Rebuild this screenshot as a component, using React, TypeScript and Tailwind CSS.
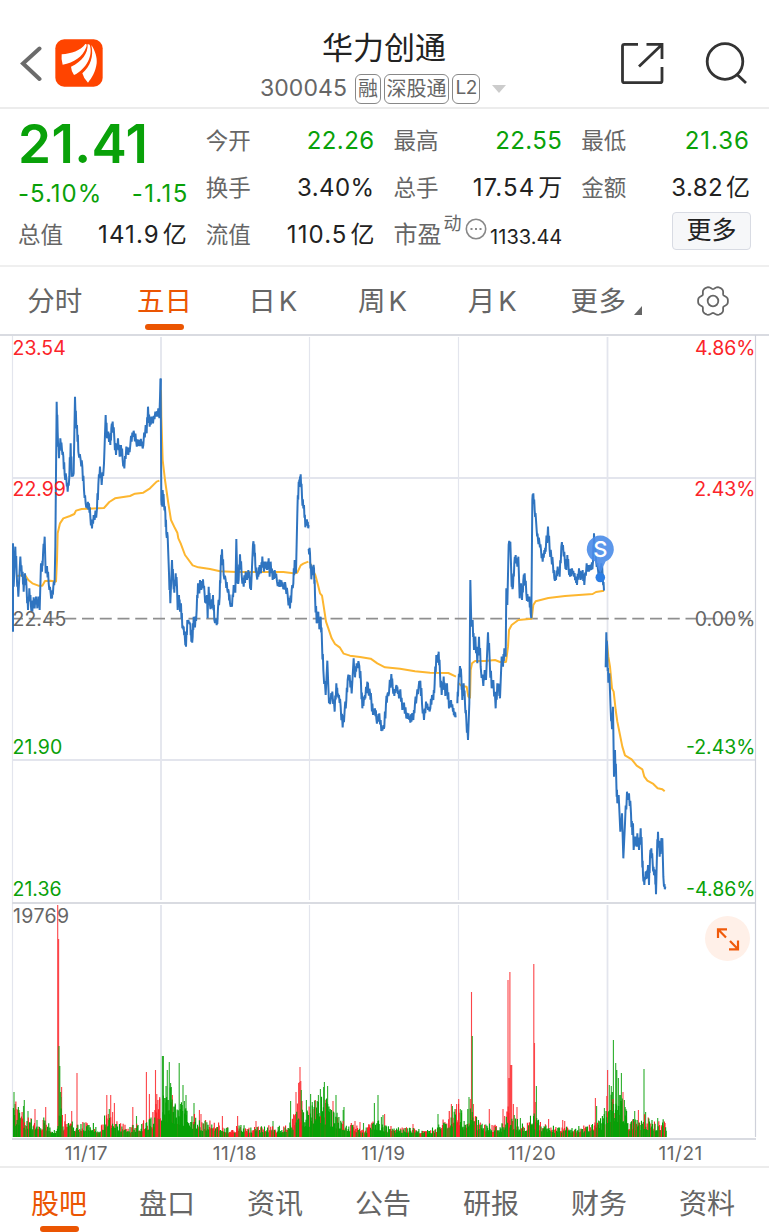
import { FC, ReactNode } from 'react';

const FONT = `font-['Inter','Noto_Sans_CJK_SC',sans-serif]`;

const GREEN = '#09a109';
const RED = '#fb2429';

interface Trace {
  x: number;
  y: number;
  price: string;
  average: string;
}

// one entry per trading day, points are in thirds of a pixel from x / y
const traces: Trace[] = [
  {
    x: 0,
    y: 360,
    price:
      '39,815 39,550 41,680 46,560 50,640 55,710 61,590 66,650 68,635 71,695 75,640 80,690 84,750 88,685 93,740 97,755 101,712 104,745 108,710 112,745 115,710 119,750 123,610 126,635 129,585 134,530 137,640 141,618 146,670 152,700 156,715 160,680 164,660 166,560 170,125 173,215 177,295 181,235 186,270 190,290 194,345 199,355 203,395 208,350 212,250 215,350 221,340 225,110 229,205 231,195 235,275 242,300 247,320 252,390 257,430 262,445 267,430 271,470 276,505 281,465 284,480 291,445 295,375 300,320 305,375 312,310 317,165 321,235 325,215 331,255 334,205 338,185 343,235 348,285 354,235 359,290 363,255 368,300 373,325 379,260 385,285 391,255 397,218 403,225 408,240 415,258 420,240 424,255 430,255 437,195 440,220 444,140 449,200 454,170 459,190 466,155 470,170 475,145 478,175 482,55',
    average:
      '50,648 75,645 85,660 97,670 115,677 127,677 135,663 152,662 168,665 171,600 173,520 180,490 190,475 210,468 223,462 228,452 245,447 312,444 328,426 345,415 390,408 405,401 430,398 450,385 470,365 478,362',
  },
  {
    x: 150,
    y: 440,
    price:
      '32,-183 34,180 37,200 38,150 42,190 46,220 49,280 53,290 57,400 61,490 66,360 70,430 73,458 77,400 81,440 83,510 87,465 90,515 93,490 97,565 101,560 105,600 108,620 112,540 117,550 121,550 124,605 128,590 131,530 135,562 140,510 144,430 148,460 150,420 154,450 159,418 164,465 168,490 171,465 173,535 176,440 180,495 184,505 189,465 193,540 199,545 202,552 204,505 209,470 212,380 216,328 221,405 227,420 232,450 236,455 240,490 246,500 251,435 256,458 259,297 262,430 266,420 270,343 275,405 281,440 287,395 291,420 295,390 299,420 303,450 309,313 313,313 316,375 320,405 325,410 329,375 333,400 337,350 342,395 346,365 351,390 356,355 359,410 362,365 368,420 374,390 381,425 387,440 391,420 396,440 402,435 407,440 413,465 420,505 425,450 430,430 434,360 438,400 442,220 446,125 449,135 452,103 456,170 460,205 462,195 466,262 468,240 472,255 476,255',
    average:
      '33,-150 34,-70 38,60 45,120 55,190 63,240 75,265 82,278 85,295 92,310 105,345 128,376 145,382 180,387 210,394 260,396 400,396 430,400 442,398 452,376 460,371 475,365',
  },
  {
    x: 300,
    y: 540,
    price:
      '26,27 30,40 34,118 38,80 42,85 45,165 50,250 55,215 58,268 62,230 66,310 70,390 77,465 82,362 87,490 92,480 97,455 104,515 109,430 113,470 117,465 122,500 128,562 134,510 139,480 143,420 149,405 155,460 161,355 165,412 170,370 178,378 183,430 187,505 192,470 196,475 202,425 205,455 210,458 214,480 219,525 225,505 229,535 234,545 238,520 244,573 249,562 253,560 258,490 262,465 267,460 274,402 278,440 283,468 288,440 292,440 297,475 301,448 307,510 312,488 319,535 325,520 331,548 336,520 340,540 345,490 350,470 356,440 361,422 366,490 372,540 378,485 384,510 391,505 396,465 400,480 404,430 409,345 413,368 416,335 420,400 425,465 431,410 436,468 441,430 447,505 453,480 459,515 463,515 467,532',
    average:
      '29,65 38,90 46,105 54,135 60,160 66,167 72,205 78,245 85,265 95,295 105,312 120,323 131,341 150,347 180,351 212,356 232,370 255,382 300,386 345,394 390,398 445,399 468,410',
  },
  {
    x: 440,
    y: 470,
    price:
      '52,700 55,645 60,588 64,620 67,690 71,640 75,700 79,750 84,810 88,700 91,330 94,470 98,450 102,540 106,500 112,580 117,500 122,590 130,648 134,600 138,630 144,487 149,570 155,655 160,630 167,715 172,640 177,660 180,685 185,560 189,590 193,535 197,560 199,355 202,405 206,225 211,215 215,350 219,350 223,280 227,255 232,290 235,260 239,385 243,340 246,390 250,330 254,310 259,370 264,395 268,380 272,430 274,445 277,90 280,70 284,120 288,150 290,180 294,210 298,215 303,240 308,275 313,240 317,245 324,170 329,240 334,260 339,285 343,325 348,330 353,290 359,320 364,230 369,225 375,280 379,300 382,255 386,300 390,320 396,295 402,320 407,320 411,345 417,295 422,330 428,300 433,345 440,280 444,305 448,285 454,300 459,275 462,190 468,270 474,300 480,320 484,280 488,320 492,362',
    average:
      '56,640 65,648 80,650 85,680 90,685 92,600 96,580 105,573 135,573 165,570 180,576 198,576 204,530 207,480 215,465 235,450 275,446 280,405 287,394 325,384 375,378 458,372 468,366 492,362',
  },
  {
    x: 590,
    y: 590,
    price:
      '47,232 49,127 52,200 55,278 58,250 62,360 66,418 69,350 72,560 75,480 79,580 82,640 86,615 91,725 96,670 100,805 105,700 111,605 114,630 117,610 123,670 127,735 129,700 131,780 136,740 141,770 142,730 147,780 152,715 156,790 159,855 163,885 167,845 171,865 174,825 177,885 180,800 184,775 188,820 192,855 195,840 198,913 201,790 204,725 209,800 213,760 217,745 220,860 222,890 226,890',
    average:
      '50,150 55,200 60,230 66,295 71,305 77,360 82,395 90,435 97,470 105,496 125,508 140,527 157,538 163,560 172,572 190,582 203,595 217,598 224,604',
  },
];

type Spike = [x: number, height: number];

const redSpikes: Spike[] = [
  [17, 28], [31, 19], [35, 28], [45.7, 30], [57.7, 232], [58.6, 198], [61.6, 50],
  [65.3, 23], [71.7, 26], [77, 64], [106.8, 42], [108.4, 23], [110.7, 42], [112.6, 25],
  [114.4, 34], [132.8, 30], [146.4, 65], [149.4, 43], [154.8, 27], [155.5, 67],
  [156.8, 43], [158, 37], [159.7, 40], [172.4, 42], [199.4, 27], [201, 23], [222.4, 21],
  [237.6, 21], [256, 16], [296, 45], [298.6, 54], [299.4, 55], [300, 70], [300.8, 56],
  [302, 36], [315.4, 37], [321.5, 33], [333, 36], [355, 16], [360, 15], [384.6, 23],
  [413, 13], [451.4, 33], [456.6, 33], [458.7, 38], [470.3, 38], [471.5, 145],
  [473.4, 33], [489.3, 28], [503, 28], [504.6, 21], [508, 157], [509.2, 59],
  [509.9, 165], [511, 72], [511.7, 72], [513.4, 33], [517, 30], [533.8, 173],
  [534.5, 94], [535.3, 35], [548.6, 18], [562.7, 17], [564.7, 16], [595.4, 39],
  [606.8, 41], [607.6, 67], [614.2, 24], [619.5, 22], [623, 45], [626.5, 20], [638.4, 27],
];

const greenSpikes: Spike[] = [
  [14, 45], [15.3, 33], [19, 27], [23.5, 31], [24.3, 37], [28, 26], [37, 17], [59, 91],
  [59.8, 71], [60.6, 45], [61, 40], [109.3, 28], [136.5, 21], [162.4, 81], [163.4, 81],
  [165, 39], [166, 51], [167.3, 67], [168.2, 37], [169.3, 75], [170.6, 54], [171.4, 50],
  [174, 30], [175.4, 32], [179.2, 74], [180.5, 33], [182, 32], [183, 52], [184.4, 36],
  [186, 42], [194, 34], [273, 16], [290.6, 36], [301.3, 47], [306.4, 37], [307.6, 25],
  [310.6, 43], [312.3, 35], [318.4, 42], [320.4, 48], [323.6, 50], [324.4, 55],
  [325.6, 34], [326.4, 37], [327.6, 51], [336, 42], [344, 30], [343.2, 27], [363.5, 14],
  [374.4, 34], [378, 42], [381.4, 20], [383, 22], [438, 23], [452.4, 31], [455, 28],
  [460.3, 28], [461.5, 24], [469, 40], [472.3, 101], [514.3, 22], [520.4, 19],
  [536.4, 51], [537.3, 14], [596.6, 31], [604.4, 29], [609.3, 52], [611.3, 51],
  [612.4, 45], [613.4, 97], [615.7, 74], [616.8, 67], [618.4, 59], [620.6, 42],
  [621.4, 64], [624.4, 37], [625.2, 30], [634.7, 26], [644, 68], [645.6, 25],
  [657.7, 19], [664.3, 13],
];

// upper bound of the quiet minutes between spikes and the share of green in them
const quiet: [x: number, height: number, green: number][] = [
  [13, 36, 0.7], [20, 22, 0.6], [32, 14, 0.4], [46, 16, 0.4], [52, 5, 0.8], [57, 8, 0.5],
  [60, 36, 0.6], [63, 16, 0.5], [78, 10, 0.7], [90, 14, 0.8], [98, 6, 0.3], [107, 24, 0.4],
  [116, 14, 0.6], [128, 8, 0.5], [142, 12, 0.4], [150, 18, 0.3], [159, 34, 0.3],
  [162, 48, 0.95], [172, 42, 0.85], [182, 34, 0.85], [192, 22, 0.6], [202, 14, 0.4],
  [222, 12, 0.6], [230, 5, 0.4], [240, 10, 0.5], [250, 7, 0.4], [262, 9, 0.5],
  [285, 8, 0.5], [294, 20, 0.3], [300, 45, 0.3], [304, 20, 0.8], [312, 32, 0.9],
  [326, 36, 0.85], [334, 24, 0.7], [344, 16, 0.7], [352, 11, 0.3], [365, 6, 0.5],
  [376, 18, 0.9], [386, 9, 0.5], [410, 7, 0.4], [430, 5, 0.5], [440, 12, 0.6],
  [450, 26, 0.5], [460, 30, 0.6], [465, 12, 0.7], [471, 40, 0.7], [477, 14, 0.6],
  [500, 9, 0.6], [508, 26, 0.3], [513, 18, 0.6], [525, 8, 0.7], [533, 22, 0.6],
  [538, 14, 0.7], [555, 8, 0.5], [580, 8, 0.5], [592, 12, 0.4], [598, 12, 0.9],
  [604, 24, 0.9], [610, 42, 0.8], [622, 36, 0.8], [630, 14, 0.6], [645, 20, 0.5],
  [655, 12, 0.5], [667, 15, 0.7],
];

const noise = (n: number) => {
  const v = Math.sin(n * 127.1 + 11.7) * 43758.5453;
  return v - Math.floor(v);
};

// fills in the minute ticks between two neighbouring turning points
const withTicks = (price: string) => {
  const points = price.split(' ').map((point) => point.split(',').map(Number));
  return points
    .flatMap(([x, y], i) => {
      const next = points[i + 1];
      if (!next || next[0] - x < 3 || Math.abs(next[1] - y) > 100) return [`${x},${y}`];
      const dx = next[0] - x;
      const dy = next[1] - y;
      const swing = 8 + 16 * noise(i + x);
      const sign = dy > 0 ? -1 : 1;
      return [
        `${x},${y}`,
        `${x + dx * 0.35},${(y + dy * 0.5 - (sign * swing) / 2).toFixed(1)}`,
        `${x + dx * 0.65},${(y + dy * 0.5 + (sign * swing) / 2).toFixed(1)}`,
      ];
    })
    .join(' ');
};

const quietBars = (() => {
  const paths = { green: '', red: '' };
  for (let i = 0; i < 1054; i++) {
    const x = 13.4 + i * 0.62;
    if (Math.abs(x - 160.8) < 0.4 || Math.abs(x - 605.5) < 0.4) continue;
    const next = Math.max(1, quiet.findIndex((entry) => entry[0] > x));
    const [x0, h0, g0] = quiet[next - 1];
    const [x1, h1] = quiet[next];
    const limit = h0 + ((h1 - h0) * (x - x0)) / (x1 - x0);
    const height = 2 + limit * (0.28 + 0.85 * noise(i) ** 1.6);
    const color = noise(i + 5000) < g0 ? 'green' : 'red';
    paths[color] += `M${x.toFixed(2)} 1137v-${height.toFixed(1)}`;
  }
  return paths;
})();

const spikePath = (spikes: Spike[]) =>
  spikes.map(([x, height]) => `M${x} 1137v-${height}`).join('');

const gearPath = (() => {
  const points: string[] = [];
  for (let i = 0; i < 72; i++) {
    const angle = (i * Math.PI) / 36;
    const radius = 13.8 + 1.5 * Math.cos(6 * angle) - 0.4 * Math.cos(12 * angle);
    points.push(
      `${(17 + radius * Math.cos(angle)).toFixed(2)} ${(17 + radius * Math.sin(angle)).toFixed(2)}`
    );
  }
  return `M${points.join('L')}Z`;
})();

const Header: FC = () => (
  <header className="flex h-[109px] items-start justify-between border-b-2 border-[#ececec] pr-[21px] pl-5">
    <div className="flex w-[180px] items-center gap-[13px] pt-[39px]">
      <svg width="22" height="48" viewBox="0 0 22 48" fill="none">
        <path d="M19.5 9.5 3 24.5 19.5 40" stroke="#6b6b6b" strokeWidth="4" strokeLinecap="round" />
      </svg>
      <svg width="48" height="48" viewBox="165 58 144 144">
        <rect x="166" y="59" width="142" height="142" rx="27" fill="#ff4400" />
        <g fill="#fff">
          <path d="M185 104C215 101 240 94 256 73Q262 71 259 82C248 112 222 129 188 135Q183 120 185 104Z" />
          <path d="M213 141C246 126 264 102 263 73L269 75C280 108 259 148 222 166Q214 155 213 141Z" />
          <path d="M274 76C285 92 292 114 290 131C287 156 275 176 264 189Q251 177 247 161C271 139 282 110 274 76Z" />
        </g>
      </svg>
    </div>
    <div className="flex flex-col items-center pt-[28px]">
      <h1 className="text-[31px] leading-[40px] text-[#222]">华力创通</h1>
      <div className="mt-[5px] flex h-[31px] items-center gap-[3px] pr-[2px] text-[#666]">
        <span className="mr-[5px] text-[23px] tracking-[0.1px]">300045</span>
        <span className="flex h-[30px] w-[26px] items-center justify-center rounded-md border-[1.5px] border-[#888] text-[20px]">融</span>
        <span className="flex h-[30px] w-[65px] items-center justify-center rounded-md border-[1.5px] border-[#888] text-[20px]">深股通</span>
        <span className="flex h-[30px] w-[28px] items-center justify-center rounded-md border-[1.5px] border-[#888] text-[19px] tracking-[-0.5px]">L2</span>
        <svg className="ml-[9px]" width="14" height="8" viewBox="0 0 14 8">
          <path d="M0 0h14L7 8Z" fill="#ccc" />
        </svg>
      </div>
    </div>
    <div className="flex w-[180px] justify-end gap-[40px] pt-[41px]">
      <svg width="44" height="44" viewBox="620 41 44 44" fill="none" stroke="#333" strokeWidth="2.8">
        <path d="M638 44.3H624.5Q622.5 44.3 622.5 46.3V80.7Q622.5 82.7 624.5 82.7H660Q662 82.7 662 80.7V67M646.5 44.3H662V59M639 66.5 661.5 45" />
      </svg>
      <svg width="44" height="44" viewBox="703 41 44 44" fill="none" stroke="#333" strokeWidth="2.8">
        <circle cx="724" cy="61.5" r="17.8" />
        <path d="m736 74.5 9 8.5" />
      </svg>
    </div>
  </header>
);

interface QuoteProps {
  label: string;
  value: string;
  unit?: string;
  className?: string;
}

const Quote: FC<QuoteProps> = ({ label, value, unit, className = 'text-[#222] tracking-[0.4px]' }) => (
  <div className="flex items-center justify-between whitespace-nowrap">
    <span className="text-[22.5px] text-[#666]">{label}</span>
    <span className={`text-[24px] ${className}`}>
      {value}
      {unit && <span className="ml-[3px] tracking-normal">{unit}</span>}
    </span>
  </div>
);

const Cell: FC<{ children: ReactNode; className: string }> = ({ children, className }) => (
  <div className={`flex items-center ${className}`}>{children}</div>
);

const Quotes: FC = () => (
  <section className="grid h-[158px] grid-cols-4 grid-rows-[47px_47px_47px] gap-x-[19px] border-b-2 border-[#efefef] pt-[8px] pr-[19px] pl-[18px]">
    <Cell className="pt-[7px] text-[53px] leading-none font-semibold tracking-[0.4px] text-[#09a109]">
      21.41
    </Cell>
    <Quote label="今开" value="22.26" className="tracking-[0.4px] text-[#09a109]" />
    <Quote label="最高" value="22.55" className="tracking-[0.4px] text-[#09a109]" />
    <Quote label="最低" value="21.36" className="tracking-[1px] text-[#09a109]" />
    <Cell className="justify-between pt-[12px] text-[24px] tracking-[1px] text-[#09a109]">
      <span>-5.10%</span>
      <span className="-mr-[2px] tracking-[1.4px]">-1.15</span>
    </Cell>
    <Quote label="换手" value="3.40%" />
    <Quote label="总手" value="17.54" unit="万" className="tracking-[1.1px] text-[#222]" />
    <Quote label="金额" value="3.82" unit="亿" />
    <Quote label="总值" value="141.9" unit="亿" className="tracking-[1.1px] text-[#222]" />
    <Quote label="流值" value="110.5" unit="亿" className="tracking-[1.1px] text-[#222]" />
    <Cell className="whitespace-nowrap text-[#666]">
      <span className="text-[24px]">市盈</span>
      <span className="mb-[22px] ml-[2px] text-[18px]">动</span>
      <svg className="mb-[12px] ml-[3px]" width="22" height="22" viewBox="0 0 22 22">
        <circle cx="11" cy="11" r="9.7" fill="none" stroke="#888" strokeWidth="1.6" />
        <path d="M5.5 11h2M10 11h2M14.5 11h2" stroke="#888" strokeWidth="2" />
      </svg>
      <span className="mt-[5px] ml-auto text-[20px] text-[#222]">1133.44</span>
    </Cell>
    <Cell className="justify-end">
      <button className="-mr-[1px] mb-[8px] h-[38px] w-[79px] rounded-[4px] border border-[#d8dbe3] bg-[#f6f7f9] text-[25px] leading-none text-[#222]">
        更多
      </button>
    </Cell>
  </section>
);

const periods = ['分时', '五日', '日K', '周K', '月K', '更多'];

const PeriodTabs: FC = () => (
  <nav className="flex h-[67px] w-[768px] text-[27.5px] text-[#666]">
    {periods.map((period) => (
      <div key={period} className="relative flex flex-1 items-center justify-center pt-[2px]">
        <span
          className={
            period === '五日'
              ? 'text-[#eb5502]'
              : period === '更多'
                ? 'mr-[10px] tracking-[0.5px]'
                : period.endsWith('K')
                  ? 'tracking-[3px]'
                  : ''
          }
        >
          {period}
        </span>
        {period === '五日' && (
          <i className="absolute bottom-[4px] h-[6px] w-[39px] rounded-full bg-[#eb5502]" />
        )}
        {period === '更多' && (
          <svg className="absolute right-[16px] bottom-[19px]" width="8" height="9" viewBox="0 0 8 9">
            <path d="M8 0v9H0Z" fill="#666" />
          </svg>
        )}
      </div>
    ))}
    <div className="flex flex-1 items-center justify-center">
      <svg width="34" height="34" viewBox="0 0 34 34" fill="none" stroke="#666" strokeWidth="1.8">
        <path d={gearPath} />
        <circle cx="17" cy="17" r="5.3" />
      </svg>
    </div>
  </nav>
);

const priceLabels = [
  { y: 355, price: '23.54', percent: '4.86%', color: RED },
  { y: 496, price: '22.99', percent: '2.43%', color: RED },
  { y: 625.5, price: '22.45', percent: '0.00%', color: '#666' },
  { y: 753.5, price: '21.90', percent: '-2.43%', color: GREEN },
  { y: 895.5, price: '21.36', percent: '-4.86%', color: GREEN },
];

const Chart: FC = () => (
  <div className="relative h-[807px]">
    <svg className="block" width="769" height="807" viewBox="0 334 769 807" fill="none">
      <g stroke="#e3e5ed" strokeWidth="2">
        <path d="M161 337V900M161 905V1137M607.5 337V900M607.5 905V1137M12 478H755M12 760H755" strokeWidth="1.8" />
        <path d="M309.5 337V900M309.5 905V1137M458.5 337V900M458.5 905V1137M12.5 335V1137" strokeWidth="1.2" />
        <path d="M0 335H769M12 903H756M12 1139H756" stroke="#d9dbe1" />
        <path d="M755.5 335V1137" stroke="#cfd1da" strokeWidth="1.2" />
      </g>

      <g strokeWidth="1.1">
        <path d={spikePath(redSpikes)} stroke={RED} opacity="0.85" />
        <path d={spikePath(greenSpikes)} stroke="#07a007" opacity="0.85" />
        <path d={quietBars.red} stroke={RED} />
        <path d={quietBars.green} stroke="#07a007" />
      </g>

      <path d="M12 618.7H755" stroke="#8f8f8f" strokeWidth="1.7" strokeDasharray="12 5.75" strokeDashoffset="1" />

      {traces.map((trace) => (
        <g
          key={trace.x}
          transform={`translate(${trace.x} ${trace.y}) scale(0.33333)`}
          strokeLinejoin="bevel"
        >
          <polyline points={trace.average} stroke="#fdb62f" strokeWidth="6" />
          <polyline points={withTicks(trace.price)} stroke="#2f74c0" strokeWidth="6" />
        </g>
      ))}

      <path
        d="M595 561.5 600.3 573 605.6 561.5A13.5 13.5 0 1 0 595 561.5Z"
        fill="#4a8ce8"
        opacity="0.9"
      />
      <circle cx="600.3" cy="577.5" r="4.8" fill="#2b7de4" />
      <text x="600.3" y="557" fontSize="22" fontWeight="500" fill="#fff" textAnchor="middle">
        S
      </text>

      <g fontSize="19.5">
        {priceLabels.map(({ y, price, percent, color }) => (
          <g key={price} fill={color}>
            <text x="12.5" y={y}>{price}</text>
            <text x="755.5" y={y} textAnchor="end">{percent}</text>
          </g>
        ))}
        <text x="13" y="923" fill="#666" letterSpacing="0.4">19769</text>
      </g>
    </svg>
    <button className="absolute top-[582px] right-[19px] flex size-[45px] items-center justify-center rounded-full bg-[#fff0e8]">
      <svg width="24" height="24" viewBox="716 926.5 24 24" fill="none" stroke="#f05a0a" strokeWidth="2.2">
        <path d="M727 928.8H718V937.5M718 928.8 726 937M738 940V948.8H729M730 940.5 738 948.8" />
      </svg>
    </button>
  </div>
);

const dates = ['11/17', '11/18', '11/19', '11/20', '11/21'];

const sections = ['股吧', '盘口', '资讯', '公告', '研报', '财务', '资料'];

const App: FC = () => (
  <main className={`h-[1232px] w-[769px] overflow-hidden bg-white ${FONT}`}>
    <Header />
    <Quotes />
    <PeriodTabs />
    <Chart />
    <div className="flex h-[27px] border-b-2 border-[#ececec] pt-[2px] pr-[14px] pl-[12px] text-[19px] tracking-[0.5px] text-[#666]">
      {dates.map((date) => (
        <span key={date} className="flex flex-1 items-center justify-center">
          {date}
        </span>
      ))}
    </div>
    <nav className="flex h-[64px] pr-[8px] pl-[5px] text-[28px] text-[#666]">
      {sections.map((section) => (
        <div key={section} className="relative flex flex-1 justify-center pt-[15px]">
          <span className={section === '股吧' ? 'text-[#eb5502]' : ''}>{section}</span>
          {section === '股吧' && (
            <i className="absolute bottom-0 h-[6px] w-[39px] rounded-full bg-[#eb5502]" />
          )}
        </div>
      ))}
    </nav>
  </main>
);

export default App;
